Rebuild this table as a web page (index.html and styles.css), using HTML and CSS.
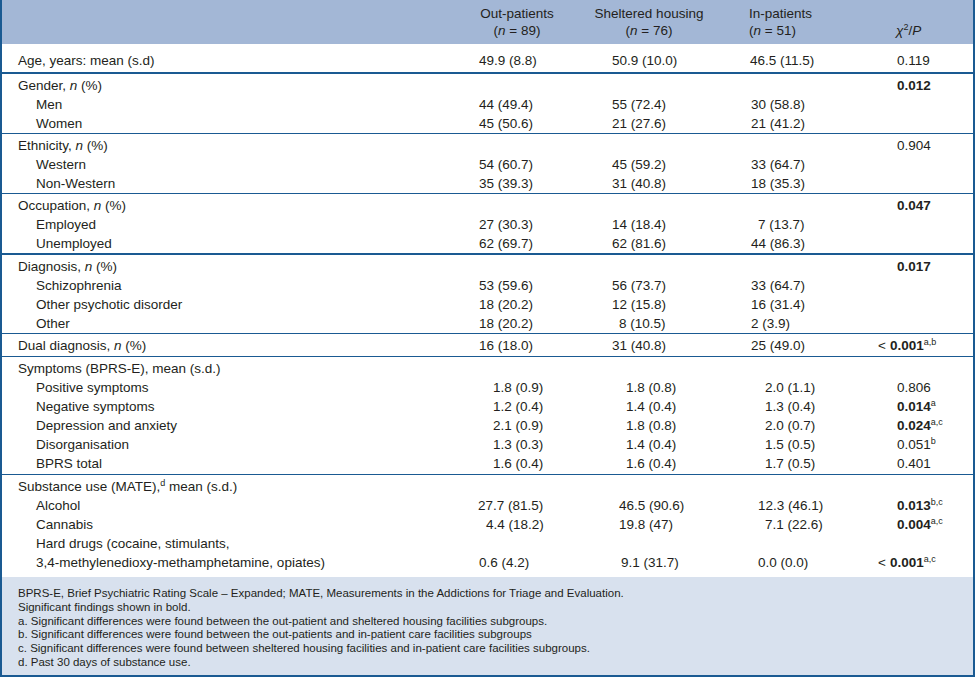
FILE: index.html
```html
<!DOCTYPE html>
<html lang="en">
<head>
<meta charset="utf-8">
<title>Table</title>
<link rel="stylesheet" href="styles.css">
</head>
<body>
<div class="tbl">
<table>
<colgroup><col class="c0"><col class="c1"><col class="c2"><col class="c3"><col class="c4"></colgroup>
<thead>
<tr>
<th></th>
<th><div class="hd hd1"><span>Out-patients</span><span>(<i>n</i> = 89)</span></div></th>
<th><div class="hd hd2"><span>Sheltered housing</span><span>(<i>n</i> = 76)</span></div></th>
<th><div class="hd hd3"><span>In-patients</span><span>(<i>n</i> = 51)</span></div></th>
<th><div class="hd hd4"><span>&nbsp;</span><span><i>χ</i><sup class="hs">2</sup>/<i>P</i></span></div></th>
</tr>
</thead>
<tbody class="sec first">
<tr><td class="lab">Age, years: mean (s.d)</td><td>49.9 (8.8)</td><td>50.9 (10.0)</td><td class="m1">46.5 (11.5)</td><td>0.119</td></tr>
</tbody>
<tbody class="sec thick">
<tr><td class="lab">Gender, <i>n</i> (%)</td><td></td><td></td><td></td><td><b>0.012</b></td></tr>
<tr><td class="lab sub">Men</td><td>44 (49.4)</td><td>55 (72.4)</td><td>30 (58.8)</td><td></td></tr>
<tr><td class="lab sub">Women</td><td>45 (50.6)</td><td>21 (27.6)</td><td>21 (41.2)</td><td></td></tr>
</tbody>
<tbody class="sec">
<tr><td class="lab">Ethnicity, <i>n</i> (%)</td><td></td><td></td><td></td><td>0.904</td></tr>
<tr><td class="lab sub">Western</td><td>54 (60.7)</td><td>45 (59.2)</td><td>33 (64.7)</td><td></td></tr>
<tr><td class="lab sub">Non-Western</td><td>35 (39.3)</td><td>31 (40.8)</td><td>18 (35.3)</td><td></td></tr>
</tbody>
<tbody class="sec">
<tr><td class="lab">Occupation, <i>n</i> (%)</td><td></td><td></td><td></td><td><b>0.047</b></td></tr>
<tr><td class="lab sub">Employed</td><td>27 (30.3)</td><td>14 (18.4)</td><td class="i1">7 (13.7)</td><td></td></tr>
<tr><td class="lab sub">Unemployed</td><td>62 (69.7)</td><td>62 (81.6)</td><td>44 (86.3)</td><td></td></tr>
</tbody>
<tbody class="sec thick">
<tr><td class="lab">Diagnosis, <i>n</i> (%)</td><td></td><td></td><td></td><td><b>0.017</b></td></tr>
<tr><td class="lab sub">Schizophrenia</td><td>53 (59.6)</td><td>56 (73.7)</td><td>33 (64.7)</td><td></td></tr>
<tr><td class="lab sub">Other psychotic disorder</td><td>18 (20.2)</td><td>12 (15.8)</td><td>16 (31.4)</td><td></td></tr>
<tr><td class="lab sub">Other</td><td>18 (20.2)</td><td class="i1">8 (10.5)</td><td>2 (3.9)</td><td></td></tr>
</tbody>
<tbody class="sec extra">
<tr><td class="lab">Dual diagnosis, <i>n</i> (%)</td><td>16 (18.0)</td><td>31 (40.8)</td><td>25 (49.0)</td><td><span class="lt">&lt;</span><b>0.001</b><sup>a,b</sup></td></tr>
</tbody>
<tbody class="sec extra">
<tr><td class="lab">Symptoms (BPRS-E), mean (s.d.)</td><td></td><td></td><td></td><td></td></tr>
<tr><td class="lab sub">Positive symptoms</td><td class="i2">1.8 (0.9)</td><td class="i2">1.8 (0.8)</td><td class="i2">2.0 (1.1)</td><td>0.806</td></tr>
<tr><td class="lab sub">Negative symptoms</td><td class="i2">1.2 (0.4)</td><td class="i2">1.4 (0.4)</td><td class="i2">1.3 (0.4)</td><td><b>0.014</b><sup>a</sup></td></tr>
<tr><td class="lab sub">Depression and anxiety</td><td class="i2">2.1 (0.9)</td><td class="i2">1.8 (0.8)</td><td class="i2">2.0 (0.7)</td><td><b>0.024</b><sup>a,c</sup></td></tr>
<tr><td class="lab sub">Disorganisation</td><td class="i2">1.3 (0.3)</td><td class="i2">1.4 (0.4)</td><td class="i2">1.5 (0.5)</td><td>0.051<sup>b</sup></td></tr>
<tr><td class="lab sub">BPRS total</td><td class="i2">1.6 (0.4)</td><td class="i2">1.6 (0.4)</td><td class="i2">1.7 (0.5)</td><td>0.401</td></tr>
</tbody>
<tbody class="sec last">
<tr><td class="lab">Substance use (MATE),<sup>d</sup> mean (s.d.)</td><td></td><td></td><td></td><td></td></tr>
<tr><td class="lab sub">Alcohol</td><td class="m1">27.7 (81.5)</td><td class="i1">46.5 (90.6)</td><td class="i1">12.3 (46.1)</td><td><b>0.013</b><sup>b,c</sup></td></tr>
<tr><td class="lab sub">Cannabis</td><td class="i1">4.4 (18.2)</td><td class="i1">19.8 (47)</td><td class="i2">7.1 (22.6)</td><td><b>0.004</b><sup>a,c</sup></td></tr>
<tr><td class="lab sub">Hard drugs (cocaine, stimulants,</td><td></td><td></td><td></td><td></td></tr>
<tr><td class="lab sub">3,4-methylenedioxy-methamphetamine, opiates)</td><td>0.6 (4.2)</td><td class="i1b">9.1 (31.7)</td><td class="i1">0.0 (0.0)</td><td><span class="lt">&lt;</span><b>0.001</b><sup>a,c</sup></td></tr>
</tbody>
</table>
<div class="notes">
<p>BPRS-E, Brief Psychiatric Rating Scale – Expanded; MATE, Measurements in the Addictions for Triage and Evaluation.</p>
<p>Significant findings shown in bold.</p>
<p>a. Significant differences were found between the out-patient and sheltered housing facilities subgroups.</p>
<p>b. Significant differences were found between the out-patients and in-patient care facilities subgroups</p>
<p>c. Significant differences were found between sheltered housing facilities and in-patient care facilities subgroups.</p>
<p>d. Past 30 days of substance use.</p>
</div>
</div>
</body>
</html>
```
FILE: styles.css
```css
html, body {
  margin: 0;
  padding: 0;
  background: #ffffff;
}
body {
  font-family: "Liberation Sans", Arial, sans-serif;
  color: #231f20;
  font-size: 13.5px;
}
.tbl {
  width: 971px;
  height: 675px;
  border: 2px solid #1a5a92;
  border-top: 0;
  display: flex;
  flex-direction: column;
}
table {
  width: 971px;
  border-collapse: collapse;
  table-layout: fixed;
}
.c0 { width: 476px; }
.c1 { width: 133px; }
.c2 { width: 139px; }
.c3 { width: 146px; }
.c4 { width: 77px; }
thead th {
  background: #a3b7d6;
  font-weight: normal;
  text-align: left;
  padding: 5px 0 5px 0;
  line-height: 17px;
  height: 34px;
  vertical-align: top;
}
.hd {
  display: flex;
  flex-direction: column;
  white-space: nowrap;
}
.hd1 { width: 80px; margin-left: -1px; align-items: center; }
.hd2 { width: 76px; margin-left: 0; align-items: center; }
.hd3 { margin-left: -1px; align-items: flex-start; }
.hd4 { margin-left: 0; align-items: flex-start; }
.hs { font-size: 9px; vertical-align: 5px; line-height: 0; }
td {
  padding: 0 0 0 1px;
  line-height: 19px;
  height: 19px;
  white-space: nowrap;
  vertical-align: top;
}
td.lab { padding-left: 16px; }
td.sub { padding-left: 34px; }
td.i1 { padding-left: 8px; }
td.i1b { padding-left: 10px; }
td.i2 { padding-left: 15px; }
td.m1 { padding-left: 0; }
.sec { border-top: 1px solid #1a5a92; }
.sec.thick { border-top: 2px solid #1a5a92; }
.sec.first { border-top: 0; }
.sec tr:first-child td { padding-top: 2px; }
.sec.first tr:first-child td { padding-top: 7px; padding-bottom: 2px; }
.sec.extra tr:last-child td { padding-bottom: 1px; }
.sec.last tr:last-child td { padding-bottom: 5px; }
b { font-weight: bold; }
sup {
  font-size: 9px;
  line-height: 0;
  vertical-align: 5px;
}
.lt {
  display: inline-block;
  width: 12px;
  margin-left: -19px;
}
.notes {
  flex: 1;
  background: #d8e1ee;
  padding: 10px 0 0 16px;
  font-size: 11.5px;
  line-height: 13.8px;
}
.notes p { margin: 0; }
```
